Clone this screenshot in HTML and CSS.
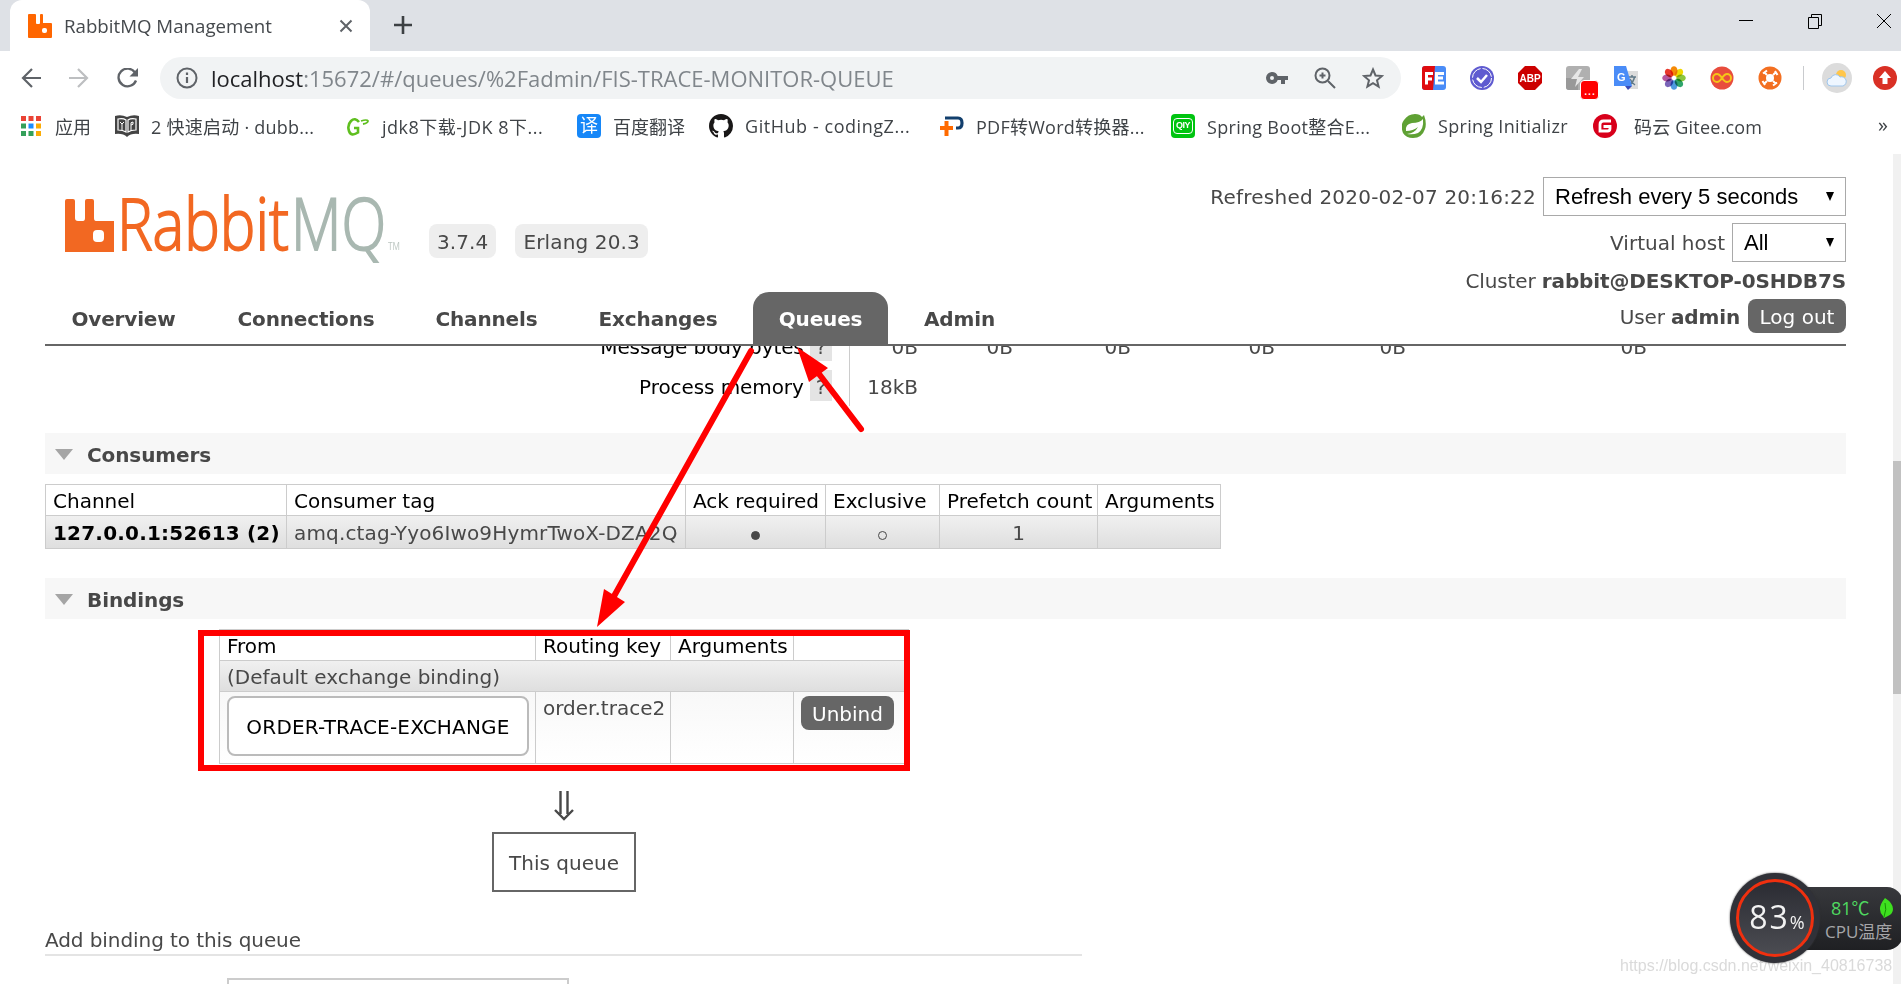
FILE: index.html
```html
<!DOCTYPE html>
<html lang="zh-CN">
  <head>
    <meta charset="UTF-8" />
    <meta name="viewport" content="width=device-width, initial-scale=1.0" />
    <title>RabbitMQ Management</title>
    <link rel="stylesheet" href="styles.css">
  </head>

  <body>
    <div class="tabstrip">
      <div class="tab">
        <svg class="favicon" width="24" height="24" viewBox="0 0 24 24"><path fill="#ff6600" d="M2 0h5q1 0 1 1v8q0 1 1 1h2q1 0 1-1V1q0-1 1-1h1q1 0 1 1v8h8q1 0 1 1v13q0 1-1 1H1q-1 0-1-1V1q0-1 1-1z"/><rect x="14" y="14" width="5" height="5" rx="2" fill="#fff"/></svg>
        <span class="tab-title">RabbitMQ Management</span>
        <svg class="tab-close" width="14" height="14" viewBox="0 0 14 14"><path stroke="#5f6368" stroke-width="2" d="M1.500 1.500l11 11M12.500 1.500l-11 11"/></svg>
      </div>
      <svg class="new-tab" width="18" height="18" viewBox="0 0 18 18"><path stroke="#3c4043" stroke-width="2.600" d="M9 0v18M0 9h18"/></svg>
      <div class="window-buttons">
        <svg width="16" height="16" viewBox="0 0 16 16"><path stroke="#000" d="M1 7.500h14"/></svg>
        <svg width="16" height="16" viewBox="0 0 16 16"><path fill="none" stroke="#000" d="M1.500 4.500h10v11h-10zM4.500 4V1.500h10v11H12"/></svg>
        <svg width="16" height="16" viewBox="0 0 16 16"><path stroke="#000" d="M1 1l14 14M15 1L1 15"/></svg>
      </div>
    </div>

    <div class="toolbar">
      <div class="nav-buttons">
        <svg width="20" height="20" viewBox="0 0 20 20"><path fill="none" stroke="#5f6368" stroke-width="2.200" d="M20 10H2M11 1l-9 9 9 9"/></svg>
        <svg width="20" height="20" viewBox="0 0 20 20"><path fill="none" stroke="#bdbfc1" stroke-width="2.200" d="M0 10h18M9 1l9 9-9 9"/></svg>
        <svg width="22" height="20" viewBox="0 0 22 20"><path fill="none" stroke="#5f6368" stroke-width="2.300" d="M18 4.500A9 8.800 0 1 0 19 12.500"/><path fill="#5f6368" d="M21 0v8.500h-8.500z"/></svg>
      </div>
      <div class="omnibox">
        <svg width="22" height="22" viewBox="0 0 22 22"><circle cx="11" cy="11" r="9.500" fill="none" stroke="#5f6368" stroke-width="2"/><path stroke="#5f6368" stroke-width="2.200" d="M11 10v6M11 5.500v2.500"/></svg>
        <span class="url"><b>localhost</b>:15672/#/queues/%2Fadmin/FIS-TRACE-MONITOR-QUEUE</span>
        <div class="omni-icons">
          <svg width="22" height="22" viewBox="0 0 22 22"><path fill="#5f6368" fill-rule="evenodd" d="M6 5a6 6 0 1 0 5.700 8H15v4h4v-4h3V9H11.700A6 6 0 0 0 6 5zm0 4a2 2 0 1 1 0 4 2 2 0 0 1 0-4z"/></svg>
          <svg width="22" height="22" viewBox="0 0 22 22"><g fill="none" stroke="#5f6368" stroke-width="2"><circle cx="8.500" cy="8.500" r="7"/><path d="M14 14l7 7M8.500 5.500v6M5.500 8.500h6"/></g></svg>
          <svg width="22" height="22" viewBox="0 0 22 22"><path fill="none" stroke="#5f6368" stroke-width="2" d="M11 2.500l2.500 6 6.500.500-5 4.300 1.600 6.200-5.600-3.400-5.600 3.400L7 13.300 2 9l6.500-.500z"/></svg>
        </div>
      </div>
      <div class="extensions">
        <svg width="24" height="24" viewBox="0 0 24 24"><rect width="24" height="24" rx="3" fill="#4a8cf7"/><path fill="#e00b0f" d="M3 0h10L11 24H3q-3 0-3-3V3q0-3 3-3z"/><path fill="none" stroke="#fff" stroke-width="3" d="M11 7.500H4.500v11M5 13h5M22 7.500h-7.500v9.500H22M14 12h7"/></svg>
        <svg width="24" height="24" viewBox="0 0 24 24"><circle cx="12" cy="12" r="12" fill="#5f5bd0"/><circle cx="12" cy="12" r="9.500" fill="none" stroke="#fff" stroke-dasharray="13 2"/><path fill="none" stroke="#fff" stroke-width="2.500" d="M7 12l4 4 6-7"/></svg>
        <svg width="24" height="24" viewBox="0 0 24 24"><path fill="#cc0000" d="M7 0h10l7 7v10l-7 7H7l-7-7V7z"/><text x="12" y="16" class="abp" text-anchor="middle">ABP</text></svg>
        <div class="bolt">
          <svg width="24" height="24" viewBox="0 0 24 24"><rect width="24" height="24" rx="3" fill="#b0b0b0"/><path fill="#999" d="M0 12h12v12H3q-3 0-3-3z"/><path fill="#e6e6e6" d="M13 3L5 13h6l-2 8 9-10h-6l4-8z"/></svg>
          <span class="badge">...</span>
        </div>
        <svg width="24" height="24" viewBox="0 0 24 24"><path fill="#dcdcdc" d="M10 5h14v18H14z"/><path fill="none" stroke="#607988" stroke-width="1.500" d="M14 11h8M18 9v2M20.500 11q-1 5-5 8M16 13q2 4 5 6"/><path fill="#4a8cf7" d="M0 0h12l6 20H0z"/><path fill="#3a4bb8" d="M11 20h7l-4 4z"/><text x="3" y="15" class="g">G</text></svg>
        <svg class="flower" width="24" height="24" viewBox="0 0 24 24"><g transform="translate(12 12)"><ellipse cy="-7" rx="3.500" ry="4.800" fill="#f58a07"/><ellipse cy="-7" rx="3.500" ry="4.800" fill="#f0d800" transform="rotate(45)"/><ellipse cy="-7" rx="3.500" ry="4.800" fill="#8cc63f" transform="rotate(90)"/><ellipse cy="-7" rx="3.500" ry="4.800" fill="#2fa56b" transform="rotate(135)"/><ellipse cy="-7" rx="3.500" ry="4.800" fill="#4f9be0" transform="rotate(180)"/><ellipse cy="-7" rx="3.500" ry="4.800" fill="#7a64b8" transform="rotate(225)"/><ellipse cy="-7" rx="3.500" ry="4.800" fill="#b5579f" transform="rotate(270)"/><ellipse cy="-7" rx="3.500" ry="4.800" fill="#e8382c" transform="rotate(315)"/></g></svg>
        <svg width="24" height="24" viewBox="0 0 24 24"><circle cx="12" cy="12" r="11.500" fill="#e84c3d"/><path fill="none" stroke="#f5c518" stroke-width="2" d="M12 12c-2-3-3.500-4-5-4a4 4 0 0 0 0 8c1.500 0 3-1 5-4s3.500-4 5-4a4 4 0 0 1 0 8c-1.500 0-3-1-5-4z"/></svg>
        <svg width="24" height="24" viewBox="0 0 24 24"><circle cx="12" cy="12" r="11.500" fill="#f36f21"/><circle cx="12" cy="12" r="4" fill="#fff"/><path fill="none" stroke="#fff" stroke-width="2" d="M9 9L6 6M15 9l3-3M9 15l-3 3M15 15l3 3M9 4.500L5 7.500M19.500 9L17 5M15 19.500l4-3M4.500 15L7 19"/></svg>
      </div>
      <div class="profile">
        <svg width="30" height="30" viewBox="0 0 30 30"><circle cx="15" cy="15" r="15" fill="#dcdcdc"/><circle cx="19" cy="12" r="5" fill="#ffc64a"/><path fill="#eef6ff" stroke="#9fc6ec" d="M9 23a4 4 0 0 1 0-8 5 5 0 0 1 9-1 4.500 4.500 0 0 1 3 9z"/></svg>
        <svg width="24" height="24" viewBox="0 0 24 24"><circle cx="12" cy="12" r="12" fill="#d93025"/><path fill="#fff" d="M12 5l6 7h-3.500v6h-5v-6H6z"/></svg>
      </div>
    </div>

    <div class="bookmarks">
      <div class="bm bm-apps">
        <svg width="20" height="20" viewBox="0 0 20 20"><path fill="#ea4335" d="M0 0h5v5H0zM7.500 0h5v5h-5zM15 0h5v5h-5z"/><path fill="#34a05a" d="M0 7.500h5v5H0zM0 15h5v5H0zM7.500 15h5v5h-5z"/><path fill="#1a8cff" d="M7.500 7.500h5v5h-5z"/><path fill="#fbac05" d="M15 7.500h5v5h-5zM15 15h5v5h-5z"/></svg>
        <span>应用</span>
      </div>
      <div class="bm bm-dubbo">
        <svg width="24" height="22" viewBox="0 0 24 22"><path fill="#444" d="M0 1q6-2 12 1 6-3 12-1v18q-8-1-12 3-4-4-12-3z"/><path fill="none" stroke="#fff" stroke-width="1.200" d="M3 4q5-1 8 1v12q-3-2-8-2zM21 4q-5-1-8 1v12q3-2 8-2z"/><path fill="none" stroke="#fff" d="M7 15V8M5 7l2 2 2-2M18 7q-3 0-2 3 3 0 2-3M16 10v6"/></svg>
        <span>2 快速启动 · dubb...</span>
      </div>
      <div class="bm bm-jdk">
        <svg width="24" height="20" viewBox="0 0 24 20"><path fill="none" stroke="#5fbf1f" stroke-width="2.600" d="M13 6Q9 1 5 5T3 15t9 1.500V12H8"/><path fill="none" stroke="#5fbf1f" stroke-width="1.800" d="M15 5q6-2 7 0 0 2-5 3"/></svg>
        <span>jdk8下载-JDK 8下...</span>
      </div>
      <div class="bm bm-fanyi">
        <i class="sq fanyi">译</i>
        <span>百度翻译</span>
      </div>
      <div class="bm bm-github">
        <svg width="24" height="24" viewBox="0 0 16 16"><path fill="#191717" d="M8 0C3.580 0 0 3.580 0 8c0 3.540 2.290 6.530 5.470 7.590.4.070.55-.17.55-.38 0-.19-.01-.82-.01-1.490-2.010.37-2.530-.49-2.690-.94-.09-.23-.48-.94-.82-1.130-.28-.15-.68-.52-.01-.53.63-.01 1.080.58 1.230.82.72 1.210 1.870.87 2.330.66.07-.52.28-.87.51-1.070-1.780-.2-3.640-.89-3.640-3.950 0-.87.31-1.590.82-2.150-.08-.2-.36-1.020.08-2.120 0 0 .67-.21 2.200.82a7.600 7.600 0 0 1 4 0c1.530-1.040 2.200-.82 2.200-.82.44 1.100.16 1.920.08 2.120.51.56.82 1.270.82 2.150 0 3.070-1.870 3.750-3.650 3.950.29.25.54.73.54 1.480 0 1.070-.01 1.930-.01 2.200 0 .21.15.46.55.38A8 8 0 0 0 16 8c0-4.420-3.580-8-8-8z"/></svg>
        <span>GitHub - codingZ...</span>
      </div>
      <div class="bm bm-pdf">
        <svg width="24" height="20" viewBox="0 0 24 20"><path fill="none" stroke="#123f6d" stroke-width="3.200" d="M5 2h13q4 0 4 5t-4 5h-2"/><path stroke="#ff6a00" stroke-width="4" d="M6.500 5v15M0 12h13"/></svg>
        <span>PDF转Word转换器...</span>
      </div>
      <div class="bm bm-boot">
        <i class="sq iqiyi"><em>QIY</em></i>
        <span>Spring Boot整合E...</span>
      </div>
      <div class="bm bm-init">
        <svg width="24" height="24" viewBox="0 0 24 24"><path fill="#5fa134" d="M22 1q3 8 1 14-3 9-12 9-7 0-10-5-3-8 1-13 4-6 11-6 5 0 7 3z"/><path fill="#fff" d="M21 5q1 10-5 14-5 2-11 1 8-1 11-7-5 4-12 4-1-7 6-8 8 0 11-4z"/></svg>
        <span>Spring Initializr</span>
      </div>
      <div class="bm bm-gitee">
        <svg width="24" height="24" viewBox="0 0 24 24"><circle cx="12" cy="12" r="12" fill="#d8001b"/><path fill="none" stroke="#fff" stroke-width="2.800" d="M18 7h-7.500Q7 7 7 10.500V17h7.500q2.500 0 2.500-2.500V12.500h-6.500"/></svg>
        <span>码云 Gitee.com</span>
      </div>
      <div class="more">»</div>
    </div>

    <div class="page">
      <div class="header">
        <div class="brand">
          <svg class="logo" width="340" height="64" viewBox="0 0 340 64">
            <path fill="#f26822" d="M2 8h6q2 0 2 2v17q0 3 3 3h5q2 0 2-3V10q0-2 2-2h5q2 0 2 2v17q0 3 2 3h18v31H0V10q0-2 2-2z"/>
            <rect x="28" y="39" width="11" height="12" rx="4" fill="#fff"/>
            <text class="logo-rabbit" x="52" y="59" textLength="172" lengthAdjust="spacingAndGlyphs">Rabbit</text>
            <text class="logo-mq" x="226" y="59" textLength="95" lengthAdjust="spacingAndGlyphs">MQ</text>
            <text class="logo-tm" x="323" y="59" textLength="12" lengthAdjust="spacingAndGlyphs">TM</text>
          </svg>
          <span class="version">3.7.4</span>
          <span class="version erlang">Erlang 20.3</span>
        </div>
        <div class="status">
          <div class="status-row refreshed"><span>Refreshed 2020-02-07 20:16:22</span><div class="select wide">Refresh every 5 seconds<i></i></div></div>
          <div class="status-row vhost"><span>Virtual host</span><div class="select">All<i></i></div></div>
          <div class="status-row cluster"><span>Cluster <b>rabbit@DESKTOP-0SHDB7S</b></span></div>
          <div class="status-row user"><span>User <b>admin</b></span><button class="btn logout">Log out</button></div>
        </div>
      </div>
      <div class="menu">
        <a class="overview">Overview</a>
        <a class="connections">Connections</a>
        <a class="channels">Channels</a>
        <a class="exchanges">Exchanges</a>
        <a class="queues selected">Queues</a>
        <a class="admin">Admin</a>
      </div>

      <div class="main">
        <div class="stats">
          <div class="stat-label">Message body bytes <span class="help">?</span></div>
          <div>0B</div><div>0B</div><div>0B</div><div>0B</div><div>0B</div><div>0B</div>
          <div class="stat-label">Process memory <span class="help">?</span></div>
          <div>18kB</div>
        </div>

        <h2 class="section">Consumers</h2>
        <table class="list consumers">
          <colgroup><col class="c1"><col class="c2"><col class="c3"><col class="c4"><col class="c5"><col class="c6"></colgroup>
          <tr><th>Channel</th><th>Consumer tag</th><th>Ack required</th><th>Exclusive</th><th>Prefetch count</th><th>Arguments</th></tr>
          <tr class="alt">
            <td><b>127.0.0.1:52613 (2)</b></td>
            <td class="ctag">amq.ctag-Yyo6Iwo9HymrTwoX-DZA2Q</td>
            <td class="c"><span class="dot"></span></td>
            <td class="c"><span class="dot open"></span></td>
            <td class="c">1</td>
            <td></td>
          </tr>
        </table>

        <h2 class="section bindings-title">Bindings</h2>
        <div class="bindings-wrap">
          <table class="list bindings">
            <colgroup><col class="b1"><col class="b2"><col class="b3"><col class="b4"></colgroup>
            <tr><th>From</th><th>Routing key</th><th>Arguments</th><th></th></tr>
            <tr class="alt"><td colspan="4">(Default exchange binding)</td></tr>
            <tr class="binding">
              <td><span class="exchange">ORDER-TRACE-EXCHANGE</span></td>
              <td>order.trace2</td>
              <td></td>
              <td><button class="btn unbind">Unbind</button></td>
            </tr>
          </table>
          <svg class="down" width="20" height="30" viewBox="0 0 20 30"><path fill="none" stroke="#484848" stroke-width="2.400" d="M6.500 0v23M13.500 0v23M1 19l9 9 9-9"/></svg>
          <div class="this-queue">This queue</div>
        </div>

        <h3 class="add-title">Add binding to this queue</h3>
        <div class="add-input"></div>
      </div>
      <div class="scrollbar"><div class="thumb"></div></div>
    </div>

    <!-- red marks -->
    <svg class="marks" width="1901" height="984" viewBox="0 0 1901 984">
      <rect x="201" y="633" width="706" height="135" fill="none" stroke="#f00" stroke-width="6"/>
      <path stroke="#f00" stroke-width="6" stroke-linecap="round" d="M751 351L613 598M861 429L816 370"/>
      <path fill="#f00" d="M597 627L604 589 625 602zM797 347L828 368 809 382z"/>
    </svg>

    <!-- cpu widget -->
    <div class="cpu">
      <div class="cpu-dial"><span>83<small>%</small></span></div>
      <div class="cpu-info">
        <div class="temp">81℃
          <svg width="14" height="20" viewBox="0 0 14 20"><path fill="#3ee01f" d="M6 0q8 5 8 11 0 5-5 7l-4 2-1-2Q-3 11 6 0z"/><path stroke="#169006" fill="none" d="M6 5q2 6-1 14"/></svg>
        </div>
        <div class="cpu-label">CPU温度</div>
      </div>
    </div>
    <div class="watermark">https://blog.csdn.net/weixin_40816738</div>
  </body>
</html>
```
FILE: styles.css
```css
* {
  margin: 0;
  padding: 0;
  box-sizing: border-box;
}

body {
  width: 1901px;
  height: 984px;
  overflow: hidden;
  position: relative;
  background: #fff;
  color: #484848;
  font: 20px "DejaVu Sans", Verdana, sans-serif;
}

svg {
  display: block;
  flex: none;
}

/* browser */
.tabstrip {
  display: flex;
  height: 51px;
  padding-left: 10px;
  background: #dee1e6;
  font-family: "Open Sans", "Noto Sans CJK SC", sans-serif;
}

.tab {
  display: flex;
  align-items: center;
  width: 360px;
  padding: 0 17px 0 18px;
  border-radius: 12px 12px 0 0;
  background: #fff;
  color: #45494d;
}

.tab-title {
  flex: 1;
  margin-left: 12px;
  font-size: 18.7px;
  white-space: nowrap;
}

.new-tab {
  margin: 16px 0 0 24px;
}

.window-buttons {
  display: flex;
  gap: 53px;
  margin: 13px 9px 0 auto;
}

.toolbar {
  display: flex;
  align-items: center;
  height: 54px;
  padding-left: 21px;
}

.nav-buttons {
  display: flex;
  gap: 28px;
  width: 139px;
}

.omnibox {
  display: flex;
  align-items: center;
  width: 1241px;
  height: 42px;
  padding: 0 17px 0 16px;
  border-radius: 21px;
  background: #f1f3f4;
}

.url {
  flex: 1;
  margin-left: 13px;
  padding-bottom: 1px;
  color: #80868b;
  font: 22px "Open Sans", sans-serif;
  white-space: nowrap;
}

.url b {
  color: #202124;
  font-weight: 400;
}

.omni-icons {
  display: flex;
  gap: 26px;
}

.extensions {
  display: flex;
  gap: 24px;
  margin-left: 21px;
  padding-right: 21px;
  border-right: 1px solid #c9cbce;
}

.abp {
  fill: #fff;
  font: bold 10px "Liberation Sans", sans-serif;
}

.g {
  fill: #fff;
  font: bold 11px "Liberation Sans", sans-serif;
}

.flower ellipse {
  mix-blend-mode: multiply;
}

.bolt {
  position: relative;
}

.badge {
  position: absolute;
  left: 14px;
  top: 14px;
  width: 19px;
  height: 20px;
  border: 1px solid #fff;
  border-radius: 4px;
  background: #f00;
  color: #fff;
  font: 14px/18px "Liberation Sans", sans-serif;
  text-align: center;
}

.profile {
  display: flex;
  align-items: center;
  gap: 21px;
  margin-left: 18px;
}

.bookmarks {
  display: flex;
  height: 49px;
  padding-left: 21px;
  color: #3f4347;
  font: 18px "Open Sans", "Noto Sans CJK SC", sans-serif;
}

.bm {
  display: flex;
  align-items: center;
  flex: none;
  height: 42px;
  gap: 12px;
  white-space: nowrap;
}

.bm-apps {
  width: 94px;
  gap: 14px;
}

.bm-dubbo {
  width: 231px;
  letter-spacing: 0.25px;
}

.bm-jdk {
  width: 231px;
  letter-spacing: 0.5px;
}

.bm-fanyi {
  width: 132px;
}

.bm-github {
  width: 231px;
  letter-spacing: 0.55px;
}

.bm-pdf {
  width: 231px;
  letter-spacing: 0.25px;
}

.bm-boot {
  width: 231px;
  letter-spacing: 0.3px;
}

.bm-init {
  width: 191px;
  letter-spacing: 0.3px;
}

.bm-gitee {
  width: 285px;
  gap: 17px;
  letter-spacing: 0.2px;
}

.sq {
  width: 24px;
  height: 24px;
  border-radius: 4px;
  color: #fff;
  font-style: normal;
  text-align: center;
}

.fanyi {
  background: #1687f8;
  font-size: 18px;
  line-height: 23px;
}

.iqiyi {
  padding: 4px 2px;
  background: #00c410;
}

.iqiyi em {
  display: block;
  height: 16px;
  border: 1.5px solid #fff;
  border-radius: 4px;
  font: bold 9px/13px "Liberation Sans", sans-serif;
  letter-spacing: -0.5px;
}

.more {
  padding-top: 6px;
  font-size: 20px;
}

/* management page */
.page {
  position: relative;
  display: flex;
  flex-direction: column;
  height: 830px;
  padding: 0 55px 0 45px;
}

.header {
  display: flex;
  justify-content: space-between;
  height: 138px;
}

.brand {
  display: flex;
  align-items: flex-start;
}

.logo {
  margin: 37px 24px 0 20px;
  overflow: visible;
}

.logo-rabbit,
.logo-mq {
  fill: #f26822;
  font: 300 71px "Open Sans", sans-serif;
  stroke: #f26822;
  stroke-width: 1.8px;
}

.logo-mq {
  fill: #a9b8b1;
  stroke: #a9b8b1;
}

.logo-tm {
  fill: #bcc6c1;
  font: 11px "Open Sans", sans-serif;
}

.version {
  height: 34px;
  margin: 70px 19px 0 0;
  padding: 1px 8px 0;
  border-radius: 8px;
  background: #eee;
  line-height: 34px;
  letter-spacing: 0.1px;
}

.erlang {
  letter-spacing: 0.15px;
}

.status {
  padding-top: 23px;
}

.status-row {
  display: flex;
  justify-content: flex-end;
  height: 39px;
  line-height: 40px;
  white-space: nowrap;
}

.refreshed span {
  letter-spacing: 0.22px;
}

.vhost {
  margin-top: 7px;
}

.cluster {
  height: 37px;
  line-height: 38px;
  letter-spacing: -0.13px;
}

.user {
  height: 34px;
  line-height: 36px;
  letter-spacing: -0.15px;
}

.select {
  display: flex;
  align-items: center;
  justify-content: space-between;
  width: 114px;
  height: 39px;
  margin-left: 7px;
  padding: 0 11px;
  border: 1px solid #a9a9a9;
  background: #fff;
  color: #000;
  font: 22px "Liberation Sans", sans-serif;
}

.select i {
  border: 4px solid transparent;
  border-top: 9px solid #000;
  border-bottom: 0;
}

.wide {
  width: 303px;
}

.btn {
  height: 34px;
  padding: 1px 0 0;
  border: 0;
  border-radius: 8px;
  background: #666;
  color: #fff;
  font: 20px "DejaVu Sans", Verdana, sans-serif;
}

.logout {
  width: 98px;
  margin-left: 8px;
}

.unbind {
  width: 93px;
}

.menu {
  display: flex;
  flex: none;
  gap: 10px;
  height: 54px;
  border-bottom: 2px solid #666;
}

.menu a {
  height: 52px;
  padding-top: 2px;
  border-radius: 16px 16px 0 0;
  font-weight: bold;
  letter-spacing: -0.15px;
  line-height: 50px;
  text-align: center;
}

.overview {
  width: 157px;
}

.connections {
  width: 188px;
}

.channels {
  width: 153px;
}

.exchanges {
  width: 170px;
}

.queues {
  width: 135px;
}

.admin {
  width: 123px;
}

.menu .selected {
  background: #666;
  color: #fff;
}

.main {
  flex: 1;
  overflow: hidden;
}

.stats {
  display: grid;
  grid-template-columns: 805px 68px 95px 118px 144px 131px 241px;
  grid-auto-rows: 40px;
  height: 87px;
  margin-top: -20px;
  line-height: 43px;
  text-align: right;
}

.stats .stat-label {
  padding-right: 17px;
  border-right: 1px solid #ccc;
  color: #000;
  letter-spacing: -0.08px;
}

.help {
  display: inline-block;
  width: 22px;
  height: 31px;
  margin-top: 4px;
  background: #e4e4e4;
  color: #484848;
  line-height: 34px;
  text-align: center;
  vertical-align: top;
}

.section {
  display: flex;
  align-items: center;
  height: 41px;
  margin-top: 20px;
  padding: 2px 0 0 10px;
  background: #f7f7f7;
  font-size: 20px;
  letter-spacing: -0.1px;
}

.section::before {
  content: "";
  margin-right: 14px;
  border: 9.5px solid transparent;
  border-top: 11px solid #a5a5a5;
  border-bottom: 0;
}

.list {
  border-collapse: collapse;
  table-layout: fixed;
}

.list th,
.list td {
  padding: 2px 0 0 7px;
  border: 1px solid #ccc;
  text-align: left;
  white-space: nowrap;
}

.list th {
  color: #000;
  font-weight: 400;
}

.list tr {
  height: 31px;
}

.list .alt {
  background: linear-gradient(#f0f0f0, #dedede);
}

.list b {
  color: #000;
  letter-spacing: 0.2px;
}

.list .ctag {
  letter-spacing: 0.15px;
}

.consumers {
  width: 1176px;
  margin-top: 10px;
}

.consumers .alt {
  height: 33px;
}

.list .c {
  padding-left: 0;
  text-align: center;
}

.c1 { width: 241px; }
.c2 { width: 399px; }
.c3 { width: 140px; }
.c4 { width: 114px; }
.c5 { width: 158px; }
.c6 { width: 123px; }

.dot {
  display: inline-block;
  width: 9px;
  height: 9px;
  border: 1px solid #484848;
  border-radius: 50%;
  background: #484848;
}

.open {
  background: none;
}

.bindings-title {
  margin-top: 29px;
}

.bindings-wrap {
  display: flex;
  flex-direction: column;
  align-items: center;
  width: 690px;
  margin: 10px 0 0 174px;
}

.bindings {
  width: 690px;
}

.b1 { width: 316px; }
.b2 { width: 135px; }
.b3 { width: 123px; }
.b4 { width: 115px; }

.list .binding {
  height: 72px;
  background: linear-gradient(#f8f8f8, #fff);
}

.binding td {
  vertical-align: top;
  padding-top: 4px;
}

.exchange {
  display: block;
  width: 302px;
  height: 60px;
  border: 2px solid #bbb;
  border-radius: 8px;
  background: #fff;
  color: #000;
  letter-spacing: 0.2px;
  line-height: 58px;
  text-align: center;
}

.down {
  margin: 27px 0 11px;
}

.this-queue {
  width: 144px;
  height: 60px;
  border: 2px solid #666;
  line-height: 59px;
  text-align: center;
}

.add-title {
  width: 1037px;
  height: 39px;
  margin-top: 25px;
  border-bottom: 2px solid #e4e4e4;
  font-size: 20px;
  font-weight: 400;
  letter-spacing: -0.08px;
  line-height: 47px;
}

.add-input {
  width: 342px;
  height: 40px;
  margin: 22px 0 0 182px;
  border: 2px solid #ccc;
}

.scrollbar {
  position: absolute;
  top: 0;
  right: 0;
  width: 8px;
  height: 100%;
  padding-top: 307px;
  background: #f1f1f1;
}

.thumb {
  height: 233px;
  background: #c1c1c1;
}

.marks {
  position: absolute;
  top: 0;
  left: 0;
}

.cpu {
  position: absolute;
  top: 873px;
  left: 1730px;
  display: flex;
  align-items: center;
}

.cpu-dial {
  z-index: 1;
  width: 90px;
  height: 90px;
  padding: 6px;
  border-radius: 50%;
  background: #303138;
  box-shadow: 0 0 2px #333;
}

.cpu-dial span {
  display: flex;
  align-items: baseline;
  justify-content: center;
  height: 78px;
  padding-left: 4px;
  border: 3px solid #f0300f;
  border-radius: 50%;
  background: linear-gradient(#2b2c33, #4b4c52);
  color: #f2f2f2;
  font: 32px/69px "Open Sans", sans-serif;
  letter-spacing: 2px;
}

.cpu-dial small {
  font-size: 18px;
  letter-spacing: 0;
}

.cpu-info {
  width: 118px;
  height: 63px;
  margin-left: -35px;
  padding: 9px 0 0 40px;
  border-radius: 0 16px 16px 0;
  background: linear-gradient(#37383c, #1f2023);
  color: #a5a5a8;
  font: 17px/24px "Open Sans", "Noto Sans CJK SC", sans-serif;
  white-space: nowrap;
}

.temp {
  display: flex;
  align-items: center;
  gap: 9px;
  padding-left: 6px;
  color: #4fd860;
  font-size: 18px;
}

.watermark {
  position: absolute;
  top: 957px;
  left: 1620px;
  color: rgba(205, 205, 205, 0.75);
  font: 16px/18px "Liberation Sans", sans-serif;
  white-space: nowrap;
}
```
